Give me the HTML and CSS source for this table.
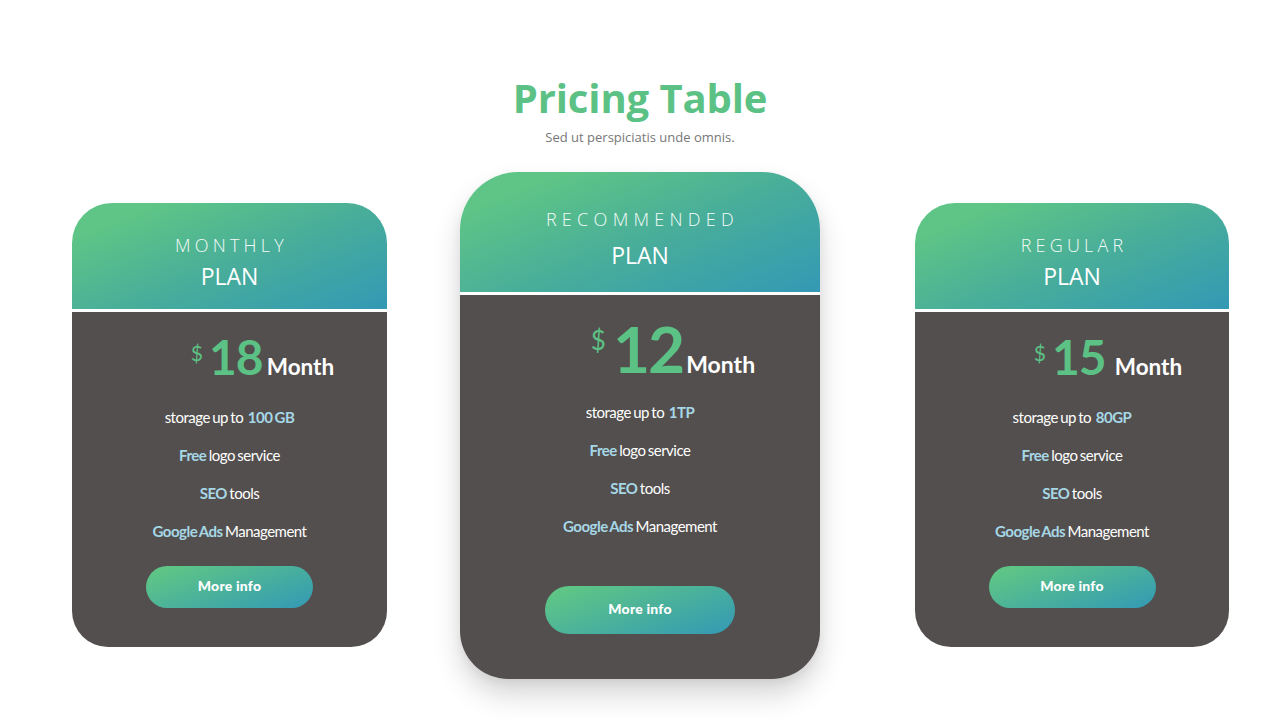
FILE: index.html
```html
<!DOCTYPE html>
<html lang="en">
<head>
<meta charset="utf-8">
<title>Pricing Table</title>
<link rel="stylesheet" href="styles.css">
</head>
<body>
<main class="page">
  <header class="intro">
    <h1 class="title">Pricing Table</h1>
    <p class="subtitle">Sed ut perspiciatis unde omnis.</p>
  </header>
  <section class="cards">
    <article class="card card-side card-left">
      <div class="card-head">
        <div class="label">MONTHLY</div>
        <div class="plan">PLAN</div>
      </div>
      <div class="card-body">
        <div class="price price-18">
          <span class="cur">$</span><span class="amt">18</span><span class="per">Month</span>
        </div>
        <ul class="features">
          <li>storage up to&nbsp; <b>100 GB</b></li>
          <li><b>Free</b> logo service</li>
          <li><b>SEO</b> tools</li>
          <li><b>Google Ads</b> Management</li>
        </ul>
        <a class="btn" href="#">More info</a>
      </div>
    </article>

    <article class="card card-main">
      <div class="card-head">
        <div class="label">RECOMMENDED</div>
        <div class="plan">PLAN</div>
      </div>
      <div class="card-body">
        <div class="price price-12">
          <span class="cur">$</span><span class="amt">12</span><span class="per">Month</span>
        </div>
        <ul class="features">
          <li>storage up to&nbsp; <b>1TP</b></li>
          <li><b>Free</b> logo service</li>
          <li><b>SEO</b> tools</li>
          <li><b>Google Ads</b> Management</li>
        </ul>
        <a class="btn" href="#">More info</a>
      </div>
    </article>

    <article class="card card-side card-right">
      <div class="card-head">
        <div class="label">REGULAR</div>
        <div class="plan">PLAN</div>
      </div>
      <div class="card-body">
        <div class="price price-15">
          <span class="cur">$</span><span class="amt">15</span><span class="per">Month</span>
        </div>
        <ul class="features">
          <li>storage up to&nbsp; <b>80GP</b></li>
          <li><b>Free</b> logo service</li>
          <li><b>SEO</b> tools</li>
          <li><b>Google Ads</b> Management</li>
        </ul>
        <a class="btn" href="#">More info</a>
      </div>
    </article>
  </section>
</main>
</body>
</html>
```

FILE: styles.css
```css
* { box-sizing: border-box; }

html, body {
  margin: 0;
  padding: 0;
  background: #ffffff;
}

body {
  font-family: "Open Sans", "Noto Sans", sans-serif;
  width: 1280px;
  height: 720px;
  overflow: hidden;
}

.page {
  width: 1280px;
  height: 720px;
}

.intro {
  padding-top: 74px;
  text-align: center;
}

.title {
  margin: 0;
  font-family: "Open Sans", sans-serif;
  font-weight: 700;
  font-size: 40px;
  line-height: 48px;
  color: #5cc184;
  letter-spacing: -0.1px;
}

.subtitle {
  margin: 6px 0 0;
  font-size: 13px;
  line-height: 18px;
  color: #777777;
}

.cards {
  display: flex;
  align-items: flex-start;
  padding-left: 72px;
  margin-top: 26px;
}

.card {
  display: flex;
  flex-direction: column;
  gap: 3px;
  background: #ffffff;
  overflow: hidden;
}

.card-side {
  width: 315px;
  height: 444px;
  margin-top: 31px;
  border-radius: 40px 40px 36px 36px;
}

.card-right {
  width: 314px;
  margin-left: 95px;
}

.card-main {
  width: 360px;
  height: 507px;
  margin-left: 73px;
  border-radius: 58px 58px 48px 48px;
  box-shadow: 0 16px 28px rgba(0, 0, 0, 0.16), 0 4px 10px rgba(0, 0, 0, 0.06);
}

.card-head {
  background: linear-gradient(158deg, #5ec586 15%, #48ad9a 55%, #3399b5 100%);
  color: #ffffff;
  text-align: center;
  flex: none;
}

.card-side .card-head {
  height: 106px;
  padding-top: 32px;
}

.card-main .card-head {
  height: 120px;
  padding-top: 37px;
}

.label {
  font-weight: 300;
  font-size: 18px;
  line-height: 20px;
  letter-spacing: 4.2px;
  padding-left: 4px;
  color: #f4fbf8;
}

.card-main .label {
  letter-spacing: 5.3px;
  padding-left: 5px;
}

.plan {
  font-size: 23px;
  line-height: 30px;
  margin-top: 6px;
}

.card-main .plan {
  margin-top: 11px;
}

.card-body {
  flex: 1;
  background: #534f4e;
  display: flex;
  flex-direction: column;
  align-items: center;
  font-family: "Lato", sans-serif;
  color: #ffffff;
}

.price {
  display: flex;
  justify-content: center;
  align-items: baseline;
  line-height: 1;
  font-family: "Lato", sans-serif;
  font-weight: 700;
  width: 100%;
}

.cur {
  align-self: flex-start;
  color: #5cc184;
  font-weight: 400;
}

.amt {
  color: #5cc184;
  letter-spacing: -1px;
}

.per {
  color: #ffffff;
}

.price-18, .price-15 {
  height: 86px;
  padding-top: 21px;
}

.price-18 { padding-left: 66px; }
.price-15 { padding-left: 72px; }

.price-18 .cur, .price-15 .cur {
  font-size: 21px;
  margin-top: 9px;
  margin-right: 6px;
}

.price-18 .amt, .price-15 .amt {
  font-size: 48px;
}

.price-18 .per, .price-15 .per {
  font-size: 22.5px;
  margin-left: 4px;
}

.price-15 .per { margin-left: 9px; }

.price-12 {
  height: 98px;
  padding-top: 22px;
  padding-left: 66px;
}

.price-12 .cur {
  font-size: 26px;
  margin-top: 10px;
  margin-right: 7px;
}

.price-12 .amt {
  font-size: 64px;
  letter-spacing: -2px;
}

.price-12 .per {
  font-size: 23px;
  margin-left: 3px;
}

.features {
  list-style: none;
  margin: 0;
  padding: 0;
  text-align: center;
  font-size: 15px;
  line-height: 38px;
  letter-spacing: -0.5px;
  word-spacing: -1px;
}

.features b {
  font-weight: 700;
  color: #a6d7e6;
}

.btn {
  display: flex;
  align-items: center;
  justify-content: center;
  padding-bottom: 3px;
  border-radius: 999px;
  background: linear-gradient(160deg, #5ec586 10%, #3399b5 100%);
  color: #ffffff;
  text-decoration: none;
  font-family: "Lato", sans-serif;
  font-weight: 900;
  font-size: 14px;
  letter-spacing: 0.2px;
}

.card-side .btn {
  width: 167px;
  height: 42px;
  margin-top: 16px;
}

.card-main .btn {
  width: 190px;
  height: 48px;
  margin-top: 41px;
}
```
